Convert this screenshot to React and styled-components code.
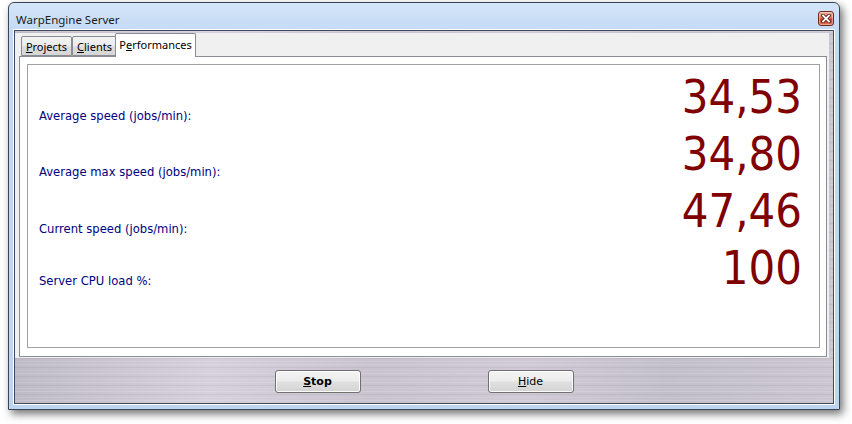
import React from 'react';
import styled, { createGlobalStyle } from 'styled-components';

const GlobalStyle = createGlobalStyle`
  html, body {
    margin: 0;
    padding: 0;
    background: #ffffff;
  }
  body {
    width: 852px;
    height: 424px;
    overflow: hidden;
    font-family: "DejaVu Sans", Verdana, sans-serif;
  }
`;

// brushed metal used by the form background
const metal = `
  background:
    repeating-linear-gradient(180deg,
      rgba(255, 255, 255, 0.14) 0 1px,
      transparent 1px 3px,
      rgba(60, 50, 70, 0.06) 3px 4px,
      transparent 4px 6px,
      rgba(255, 255, 255, 0.09) 6px 7px,
      transparent 7px 9px),
    linear-gradient(90deg, #bfbbc6 0%, #d6d0dd 24%, #c8c3ce 44%, #d0cad6 62%, #c3bfca 80%, #cbc6d1 100%);
`;

const Window = styled.div`
  box-sizing: border-box;
  margin: 2px 0 0 8px;
  width: 832px;
  height: 408px;
  border: 1px solid #3a4656;
  border-radius: 6px 6px 0 0;
  padding: 0 5px 5px;
  background: linear-gradient(180deg, #d3e5f9 0%, #c3daf4 30px, #bed5f0 100%);
  box-shadow: 3px 4px 8px rgba(0, 0, 0, 0.55);
  display: flex;
  flex-direction: column;
`;

const TitleBar = styled.div`
  height: 26px;
  display: flex;
  justify-content: space-between;
  align-items: flex-start;
`;

const Title = styled.div`
  margin: 8px 0 0 2px;
  line-height: 17px;
  font-family: "Noto Sans", "Open Sans", sans-serif;
  font-size: 11.5px;
  color: #1b1b1b;
`;

const CloseButton = styled.div`
  box-sizing: border-box;
  margin-top: 8px;
  width: 16px;
  height: 15px;
  border: 1px solid #6f2a1c;
  border-radius: 3px;
  background: linear-gradient(180deg, #eeb2a2 0%, #dc7c62 45%, #c7442a 55%, #d8735a 100%);
  box-shadow: inset 0 0 0 1px rgba(255, 220, 210, 0.5);
  display: flex;
  align-items: center;
  justify-content: center;
`;

const ClientArea = styled.div`
  margin-top: 1px;
  height: 372px;
  border: 1px solid #3f4957;
  box-shadow: 0 0 0 1px #ffffff;
  ${metal}
  display: flex;
  flex-direction: column;
  padding-top: 2px;
  box-sizing: content-box;
`;

const TabArea = styled.div`
  height: 325px;
  margin-right: 4px;
  padding: 0 2px 1px 4px;
  box-sizing: border-box;
  background: #f0f0f0;
  display: flex;
  flex-direction: column;
`;

const TabStrip = styled.div`
  height: 23px;
  padding-left: 2px;
  display: flex;
  align-items: flex-end;
`;

const Tab = styled.div`
  box-sizing: border-box;
  width: ${({ $w }) => $w}px;
  height: ${({ $active }) => ($active ? 24 : 20)}px;
  margin: ${({ $active }) => ($active ? '0 -2px -1px -2px' : '0')};
  padding-top: ${({ $active }) => ($active ? 1 : 0)}px;
  border: 1px solid #898c95;
  border-bottom: ${({ $active }) => ($active ? 'none' : '1px solid #898c95')};
  border-radius: 2px 2px 0 0;
  background: ${({ $active }) =>
    $active ? '#ffffff' : 'linear-gradient(180deg, #f3f3f3 0%, #ebebeb 50%, #dedede 51%, #d6d6d6 100%)'};
  position: relative;
  z-index: ${({ $active }) => ($active ? 2 : 0)};
  text-align: center;
  line-height: 19px;
  font-family: "Noto Sans", "Open Sans", sans-serif;
  font-size: 11px;
  color: #000000;
`;

const Panel = styled.div`
  box-sizing: border-box;
  height: 301px;
  border: 1px solid #898c95;
  background: #ffffff;
  padding: 7px 6px 8px 7px;
  position: relative;
  z-index: 1;
`;

const Group = styled.div`
  box-sizing: border-box;
  height: 284px;
  border: 1px solid #a0a0a0;
  padding: 14px 17px 0 11px;
  display: flex;
  flex-direction: column;
`;

const Row = styled.div`
  height: 57px;
  display: flex;
  justify-content: space-between;
  align-items: flex-start;
`;

const Label = styled.div`
  margin-top: ${({ $offset }) => $offset}px;
  font-size: 11.6px;
  line-height: 14px;
  color: #000080;
`;

const Value = styled.div`
  font-size: 42px;
  line-height: 42px;
  color: #800000;
  transform: scaleY(1.08);
  transform-origin: right bottom;
`;

const ButtonBar = styled.div`
  flex: 1;
  padding-top: 12px;
  display: flex;
  justify-content: center;
  align-items: flex-start;
  gap: 127px;
`;

const Button = styled.div`
  box-sizing: border-box;
  width: 86px;
  height: 23px;
  border: 1px solid #707070;
  border-radius: 3px;
  background: linear-gradient(180deg, #f4f4f4 0%, #ececec 48%, #e0e0e0 52%, #d3d3d3 100%);
  box-shadow: inset 0 0 0 1px #fbfbfb;
  display: flex;
  align-items: center;
  justify-content: center;
  font-size: 11px;
  font-weight: ${({ $default }) => ($default ? 700 : 400)};
  color: #000000;
`;

const stats = [
  { label: 'Average speed (jobs/min):', value: '34,53', offset: 30 },
  { label: 'Average max speed (jobs/min):', value: '34,80', offset: 29 },
  { label: 'Current speed (jobs/min):', value: '47,46', offset: 29 },
  { label: 'Server CPU load %:', value: '100', offset: 24 },
];

export default function App() {
  return (
    <>
      <GlobalStyle />
      <Window>
        <TitleBar>
          <Title>WarpEngine Server</Title>
          <CloseButton>
            <svg width="10" height="9" viewBox="0 0 10 9">
              <path d="M2 1.5 L8 7.5 M8 1.5 L2 7.5" stroke="#5a1a10" strokeWidth="3.6" strokeLinecap="square" />
              <path d="M2 1.5 L8 7.5 M8 1.5 L2 7.5" stroke="#ffffff" strokeWidth="1.8" strokeLinecap="square" />
            </svg>
          </CloseButton>
        </TitleBar>

        <ClientArea>
          <TabArea>
            <TabStrip>
              <Tab $w={51}><u>P</u>rojects</Tab>
              <Tab $w={45}><u>C</u>lients</Tab>
              <Tab $w={81} $active>P<u>e</u>rformances</Tab>
            </TabStrip>
            <Panel>
              <Group>
                {stats.map((s) => (
                  <Row key={s.label}>
                    <Label $offset={s.offset}>{s.label}</Label>
                    <Value>{s.value}</Value>
                  </Row>
                ))}
              </Group>
            </Panel>
          </TabArea>

          <ButtonBar>
            <Button $default><u>S</u>top</Button>
            <Button><u>H</u>ide</Button>
          </ButtonBar>
        </ClientArea>
      </Window>
    </>
  );
}
